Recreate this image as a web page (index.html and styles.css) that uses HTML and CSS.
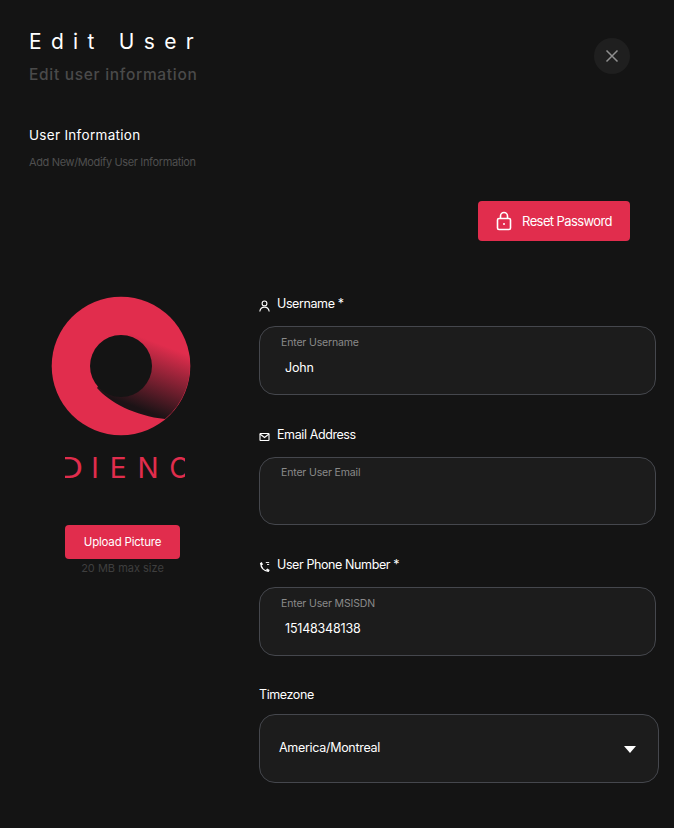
FILE: index.html
```html
<!DOCTYPE html>
<html lang="en">
<head>
    <meta charset="UTF-8">
    <meta name="viewport" content="width=device-width, initial-scale=1.0">
    <title>Edit User</title>
    <link rel="stylesheet" href="styles.css">
</head>
<body>
    <div class="container">
        <div class="header">
            <div>
                <h1>Edit User</h1>
                <p class="subtitle">Edit user information</p>
            </div>
            <button class="close-btn" aria-label="Close">
                <svg width="14" height="14" viewBox="0 0 14 14"><path d="M1.5 1.5l11 11M12.5 1.5l-11 11" stroke="#8f8f8f" stroke-width="1.5" fill="none"/></svg>
            </button>
        </div>

        <h2>User Information</h2>
        <p class="section-note">Add New/Modify User Information</p>

        <div class="actions">
            <button class="reset-btn">
                <svg width="16" height="20" viewBox="0 0 16 20" fill="none" stroke="#fff" stroke-width="1.6">
                    <rect x="1.5" y="7.5" width="13" height="11" rx="1.5"/>
                    <path d="M4.5 7.5V5a3.5 3.5 0 0 1 7 0v2.5"/>
                    <circle cx="8" cy="13" r="1" fill="#fff" stroke="none"/>
                </svg>
                Reset Password
            </button>
        </div>

        <div class="form-layout">
            <div class="picture-col">
                <svg class="logo" width="140" height="140" viewBox="0 0 140 140">
                    <defs>
                        <linearGradient id="shade" x1="119" y1="52" x2="95" y2="115" gradientUnits="userSpaceOnUse">
                            <stop offset="0" stop-color="#e12d4d"/>
                            <stop offset="1" stop-color="#1c1316"/>
                        </linearGradient>
                    </defs>
                    <circle cx="70" cy="70" r="69.3" fill="#e12d4d"/>
                    <path d="M46 92C58 106 84 120 114 123A69.300 69.300 0 0 0 138 58L80 36L60 70Z" fill="url(#shade)"/>
                    <circle cx="70" cy="70" r="31" fill="#141414"/>
                </svg>
                <div class="logo-word"><span class="logo-first">D</span><span class="logo-mid">IEN</span><span class="logo-last">O</span></div>
                <button class="upload-btn">Upload Picture</button>
                <p class="size-note">20 MB max size</p>
            </div>

            <div class="fields-col">
                <div class="field">
                    <label class="field-label">
                        <svg width="12" height="12" viewBox="0 0 12 12" fill="none" stroke="#fff" stroke-width="1.1"><circle cx="5.500" cy="3.400" r="2.400"/><path d="M.8 11.500c.4-3 2.200-4.400 4.700-4.400s4.300 1.400 4.700 4.400"/></svg>
                        Username *
                    </label>
                    <div class="input-box">
                        <span class="hint">Enter Username</span>
                        <span class="value">John</span>
                    </div>
                </div>

                <div class="field">
                    <label class="field-label">
                        <svg width="12" height="12" viewBox="0 0 12 12" fill="none" stroke="#fff" stroke-width="1.1"><rect x="1" y="2.500" width="9" height="7" rx=".6"/><path d="M1 3l4.500 3.500L10 3"/></svg>
                        Email Address
                    </label>
                    <div class="input-box input-box-short">
                        <span class="hint">Enter User Email</span>
                    </div>
                </div>

                <div class="field">
                    <label class="field-label">
                        <svg width="12" height="12" viewBox="0 0 12 12" fill="none" stroke="#fff"><path d="M1.800 2.500c.2 4.200 3.200 7.300 7.700 7.900" stroke-width="1.300"/><path d="M.8 2.200l2-1.200 1.200 2.500-1.500 1zM7 8.800l1.300-1.200 2.400 1.300-1 2z" fill="#fff" stroke="none"/><path d="M6.800 1.500h3.400M8 3.500h2.200" stroke-width=".9"/></svg>
                        User Phone Number *
                    </label>
                    <div class="input-box">
                        <span class="hint">Enter User MSISDN</span>
                        <span class="value">15148348138</span>
                    </div>
                </div>

                <div class="field">
                    <label class="field-label field-label-plain">Timezone</label>
                    <div class="select-box">
                        <span>America/Montreal</span>
                        <span class="caret"></span>
                    </div>
                </div>
            </div>
        </div>
    </div>
</body>
</html>
```

FILE: styles.css
```css
body {
    background-color: #141414;
    color: #ffffff;
    font-family: Inter, "Liberation Sans", sans-serif;
    margin: 0;
    padding: 0;
}

button {
    border: none;
    cursor: pointer;
    color: #ffffff;
    font-family: inherit;
}

.container {
    padding: 30px 15px 0 29px;
    height: 798px;
    overflow: hidden;
}

.header {
    display: flex;
    justify-content: space-between;
    align-items: flex-start;
    padding-right: 29px;
}

h1 {
    font-size: 21px;
    font-weight: 400;
    line-height: 24px;
    letter-spacing: 9.3px;
    margin: 0;
}

.subtitle {
    color: #4a4a4a;
    font-size: 15.5px;
    font-weight: 500;
    line-height: 20px;
    letter-spacing: 0.7px;
    margin: 11px 0 0;
}

.close-btn {
    width: 36px;
    height: 36px;
    margin-top: 8px;
    padding: 0;
    border-radius: 50%;
    background-color: #1f1f1f;
    display: flex;
    align-items: center;
    justify-content: center;
}

h2 {
    font-size: 13.5px;
    font-weight: 400;
    line-height: 18px;
    letter-spacing: 0.3px;
    margin: 41px 0 0;
}

.section-note {
    color: #4f4f4f;
    font-size: 11px;
    line-height: 14px;
    letter-spacing: -0.36px;
    margin: 11px 0 0;
}

.actions {
    display: flex;
    justify-content: flex-end;
    padding-right: 29px;
    margin-top: 32px;
}

.reset-btn {
    width: 152px;
    height: 40px;
    border-radius: 4px;
    background-color: #e12d4d;
    font-size: 13px;
    letter-spacing: -0.6px;
    display: flex;
    align-items: center;
    justify-content: center;
    gap: 10px;
}

.form-layout {
    display: grid;
    grid-template-columns: 230px 400px;
    margin-top: 54px;
}

.picture-col {
    display: flex;
    flex-direction: column;
    align-items: center;
    width: 187px;
}

.logo {
    margin: 1px 3px 0 0;
}

.logo-word {
    width: 120px;
    height: 22px;
    margin: 21px 0 0 5px;
    overflow: hidden;
    display: flex;
    color: #e12d4d;
    font-size: 28px;
    font-weight: 400;
    line-height: 22px;
}

.logo-word span {
    white-space: nowrap;
}

.logo-word .logo-first {
    display: inline-block;
    margin: 0 8px 0 -2px;
    transform: scaleX(1.3);
    transform-origin: right center;
}

.logo-word .logo-mid {
    letter-spacing: 11px;
}

.logo-word .logo-last {
    margin-left: -0.5px;
}

.upload-btn {
    width: 115px;
    height: 34px;
    margin-top: 46px;
    border-radius: 4px;
    background-color: #e12d4d;
    font-size: 11.5px;
    letter-spacing: -0.2px;
}

.size-note {
    color: #3f3f3f;
    font-size: 11px;
    line-height: 14px;
    margin: 2px 0 0;
}

.fields-col {
    display: flex;
    flex-direction: column;
    gap: 31px;
}

.field-label {
    display: flex;
    align-items: center;
    gap: 6px;
    font-size: 12.5px;
    line-height: 16px;
    letter-spacing: -0.4px;
    margin-bottom: 14px;
}

.field-label svg {
    margin-top: 5px;
}

.field-label-plain {
    margin-bottom: 11px;
}

.input-box {
    box-sizing: border-box;
    width: 397px;
    height: 69px;
    padding: 9px 21px;
    background-color: #1c1c1c;
    border: 1px solid #45474d;
    border-radius: 16px;
    display: flex;
    flex-direction: column;
}

.input-box-short {
    height: 68px;
    padding-top: 8px;
}

.hint {
    color: #8a8a8a;
    font-size: 10.5px;
    line-height: 14px;
    letter-spacing: -0.15px;
}

.value {
    font-size: 12.5px;
    line-height: 16px;
    letter-spacing: -0.2px;
    margin: 10px 0 0 4px;
}

.select-box {
    box-sizing: border-box;
    width: 400px;
    height: 69px;
    padding: 0 22px 2px 19px;
    background-color: #1c1c1c;
    border: 1px solid #45474d;
    border-radius: 16px;
    font-size: 12.5px;
    letter-spacing: -0.3px;
    display: flex;
    align-items: center;
    justify-content: space-between;
}

.caret {
    width: 0;
    height: 0;
    margin-top: 3px;
    border-left: 6px solid transparent;
    border-right: 6px solid transparent;
    border-top: 7px solid #ffffff;
}
```
